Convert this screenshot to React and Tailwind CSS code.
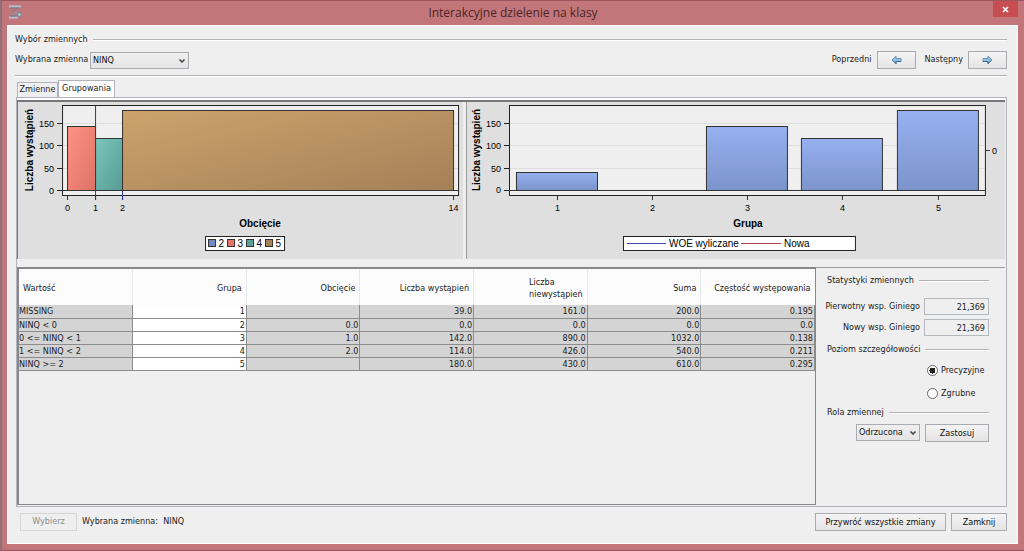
import React, { useState } from "react";
import { ChevronDown } from "lucide-react";

const columns = [
  "Wartość",
  "Grupa",
  "Obcięcie",
  "Liczba wystąpień",
  "Liczba niewystąpień",
  "Suma",
  "Częstość występowania",
];

const rows = [
  ["MISSING", "1", "", "39.0", "161.0", "200.0", "0.195"],
  ["NINQ < 0", "2", "0.0", "0.0", "0.0", "0.0", "0.0"],
  ["0 <= NINQ < 1", "3", "1.0", "142.0", "890.0", "1032.0", "0.138"],
  ["1 <= NINQ < 2", "4", "2.0", "114.0", "426.0", "540.0", "0.211"],
  ["NINQ >= 2", "5", "", "180.0", "430.0", "610.0", "0.295"],
];

const yTicks = [
  { label: "150", y: 123.5 },
  { label: "100", y: 145.5 },
  { label: "50", y: 168.5 },
  { label: "0", y: 190.5 },
];

const cutTicks = [
  { label: "0", x: 67.5 },
  { label: "1", x: 95.5 },
  { label: "2", x: 122.5 },
  { label: "14", x: 453.5 },
];

const cutLegend = [
  { label: "2", x: 208.5, fill: "#7488c4" },
  { label: "3", x: 227.5, fill: "#e5776b" },
  { label: "4", x: 246.5, fill: "#5aa198" },
  { label: "5", x: 265.5, fill: "#a8835a" },
];

const groupBars = [
  { label: "1", x: 557.5, top: 172.5 },
  { label: "2", x: 652.5, top: null },
  { label: "3", x: 747.5, top: 126.5 },
  { label: "4", x: 842.5, top: 138.5 },
  { label: "5", x: 938.5, top: 110.5 },
];

const buttonClass =
  "h-[18px] border border-[#a9abb0] bg-gradient-to-b from-[#f4f4f4] to-[#e4e4e4] text-center leading-[14px] text-[#111]";

const AppIcon = () => (
  <svg width="16" height="16" viewBox="0 0 16 16" fill="none">
    <path d="M1 2.5h12M1 13.5h9" stroke="#b3c3d3" strokeWidth="2" />
    <path d="M2 4h10M2 12h8" stroke="#77708c" strokeWidth="1" />
    <path d="M5 11V9M7.5 11V7M10 12V8" stroke="#8c97a8" strokeWidth="2" />
    <path d="M5 7l4-2" stroke="#8d6f8d" strokeWidth="1" />
    <circle cx="11.5" cy="10.5" r="2" fill="#a9c4c8" stroke="#6d7f98" />
  </svg>
);

const ArrowIcon = ({ flip }) => (
  <svg width="11" height="10" viewBox="0 0 11 10" className={flip ? "-scale-x-100" : ""}>
    <path d="M1 5l4-4v2.5h5v3H5V9z" fill="#8fc0e4" stroke="#6f93b2" strokeLinejoin="round" />
    <path d="M2 5.5l3 3v-2h5" fill="none" stroke="#3c6c96" />
  </svg>
);

const SectionTitle = ({ children }) => (
  <div className="flex h-3 items-center gap-[5px]">
    <span className="whitespace-nowrap">{children}</span>
    <span className="h-[2px] flex-1 border-t border-b border-t-[#b2b2b2] border-b-white" />
  </div>
);

const Dropdown = ({ id, label, options, className }) => (
  <div className={`relative ${className}`}>
    <select
      id={id}
      aria-label={label}
      className="h-[17px] w-full appearance-none border border-[#a9abb0] bg-gradient-to-b from-[#efefef] to-[#e4e4e4] pl-[2px] leading-[13px] text-[#111]"
    >
      {options.map((option) => (
        <option key={option}>{option}</option>
      ))}
    </select>
    <ChevronDown
      className="pointer-events-none absolute top-[5px] right-[3px] h-2 w-2 text-[#444]"
      strokeWidth={5}
    />
  </div>
);

const YAxis = ({ axisX, endX, titleX }) => (
  <g>
    <text
      transform={`translate(${titleX} 150) rotate(-90)`}
      textAnchor="middle"
      fontSize="10"
      fontWeight="bold"
    >
      Liczba wystąpień
    </text>
    {yTicks.map((tick) => (
      <g key={tick.label}>
        <path d={`M${axisX} ${tick.y}H${endX}`} stroke="#dedede" />
        <path d={`M${axisX - 5} ${tick.y}H${axisX}`} stroke="#222" />
        <text x={axisX - 8} y={tick.y + 3} textAnchor="end" fontSize="9">
          {tick.label}
        </text>
      </g>
    ))}
  </g>
);

const CutChart = () => (
  <svg
    viewBox="18 102 445 157"
    className="block h-full w-full font-['Liberation_Sans',sans-serif]"
    role="img"
    aria-label="Obcięcie"
  >
    <defs>
      <linearGradient id="red" x1="0" y1="0" x2="1" y2="1">
        <stop offset="0" stopColor="#ff9384" />
        <stop offset="1" stopColor="#dc7266" />
      </linearGradient>
      <linearGradient id="teal" x1="0" y1="0" x2="1" y2="1">
        <stop offset="0" stopColor="#7ac6bc" />
        <stop offset="1" stopColor="#569b93" />
      </linearGradient>
      <linearGradient id="tan" x1="0" y1="0" x2="1" y2="1">
        <stop offset="0" stopColor="#cda26c" />
        <stop offset="1" stopColor="#a58158" />
      </linearGradient>
    </defs>
    <rect x="62" y="106" width="397" height="89" fill="#efefef" />
    <YAxis axisX={62} endX={458} titleX={33} />
    <rect x="67.5" y="126.5" width="28" height="64" fill="url(#red)" stroke="#333" />
    <rect x="95.5" y="138.5" width="27" height="52" fill="url(#teal)" stroke="#333" />
    <rect x="122.5" y="110.5" width="331" height="80" fill="url(#tan)" stroke="#333" />
    <rect x="62.5" y="105.5" width="396" height="90" fill="none" stroke="#222" />
    <path d="M62 190.5H458" stroke="#333" />
    {cutTicks.map((tick) => (
      <g key={tick.label}>
        <path d={`M${tick.x} 196V200`} stroke="#333" />
        <text x={tick.x} y="211" textAnchor="middle" fontSize="9">
          {tick.label}
        </text>
      </g>
    ))}
    <path d="M95.5 106V200M122.5 191V200" stroke="#2c34a0" />
    <text x="260" y="227" textAnchor="middle" fontSize="10" fontWeight="bold">
      Obcięcie
    </text>
    <rect x="205.5" y="236.5" width="79" height="14" fill="#fff" stroke="#222" />
    {cutLegend.map((item) => (
      <g key={item.label}>
        <rect x={item.x} y="239.5" width="7" height="7" fill={item.fill} stroke="#333" />
        <text x={item.x + 10} y="247" fontSize="10">
          {item.label}
        </text>
      </g>
    ))}
  </svg>
);

const GroupChart = () => (
  <svg
    viewBox="467 102 538 157"
    className="block h-full w-full font-['Liberation_Sans',sans-serif]"
    role="img"
    aria-label="Grupa"
  >
    <defs>
      <linearGradient id="blue" x1="0" y1="0" x2="0" y2="1">
        <stop offset="0" stopColor="#97b1f1" />
        <stop offset="1" stopColor="#7b94cb" />
      </linearGradient>
    </defs>
    <rect x="509" y="106" width="477" height="89" fill="#efefef" />
    <YAxis axisX={509} endX={985} titleX={480} />
    {groupBars.map((bar) => (
      <g key={bar.label}>
        {bar.top && (
          <rect
            x={bar.x - 41}
            y={bar.top}
            width="81"
            height={190.5 - bar.top}
            fill="url(#blue)"
            stroke="#333"
          />
        )}
        <path d={`M${bar.x} 196V200`} stroke="#333" />
        <text x={bar.x} y="211" textAnchor="middle" fontSize="9">
          {bar.label}
        </text>
      </g>
    ))}
    <rect x="509.5" y="105.5" width="476" height="90" fill="none" stroke="#222" />
    <path d="M509 190.5H985M986 150.5H990" stroke="#333" />
    <text x="992" y="154" fontSize="9">
      0
    </text>
    <text x="748" y="227" textAnchor="middle" fontSize="10" fontWeight="bold">
      Grupa
    </text>
    <rect x="623.5" y="236.5" width="232" height="14" fill="#fff" stroke="#222" />
    <path d="M627 243.5H666" stroke="#3c48b4" />
    <text x="669" y="247" fontSize="10">
      WOE wyliczane
    </text>
    <path d="M741 243.5H781" stroke="#b43c44" />
    <text x="784" y="247" fontSize="10">
      Nowa
    </text>
  </svg>
);

const GroupTable = () => (
  <table className="w-full table-fixed border-collapse">
    <thead>
      <tr className="h-9 bg-[#fcfcfc]">
        {columns.map((column, index) => (
          <th
            key={column}
            className={`border-r border-[#e6e9ec] px-1 pt-[2px] font-normal leading-3 last:border-r-0 ${
              index === 0 ? "text-left" : "text-right"
            }`}
          >
            {column === "Liczba niewystąpień" ? (
              <span className="inline-block text-left">
                Liczba
                <br />
                niewystąpień
              </span>
            ) : (
              column
            )}
          </th>
        ))}
      </tr>
    </thead>
    <tbody>
      {rows.map((row) => (
        <tr key={row[0]} className="h-[13px]">
          {row.map((cell, index) => (
            <td
              key={index}
              className={`border-r border-b border-[#8c8c8c] p-0 leading-3 ${
                index === 0 ? "text-left" : "pr-px text-right"
              } ${index === 1 ? "bg-white" : "bg-[#d4d4d4]"}`}
            >
              {cell}
            </td>
          ))}
        </tr>
      ))}
    </tbody>
  </table>
);

const StatField = ({ id, label }) => (
  <div className="flex items-center justify-end gap-1">
    <label htmlFor={id} className="whitespace-nowrap">
      {label}
    </label>
    <input
      id={id}
      readOnly
      defaultValue="21,369"
      className="h-[17px] w-[65px] shrink-0 border border-[#b5b8bc] bg-[#efefef] pr-[3px] text-right"
    />
  </div>
);

const DetailRadio = ({ value, checked, onChange }) => (
  <label className="flex h-[13px] w-[62px] items-center gap-[3px]">
    <input
      type="radio"
      name="detail"
      checked={checked}
      onChange={() => onChange(value)}
      className="h-[11px] w-[11px] shrink-0 appearance-none rounded-full border border-[#666] bg-white checked:bg-[radial-gradient(circle,#222_0_3px,#fff_3px)]"
    />
    {value}
  </label>
);

const SidePanel = () => {
  const [detail, setDetail] = useState("Precyzyjne");

  return (
    <aside className="w-[189px] shrink-0 border-t border-[#999] pt-[7px] pr-4 pl-[11px]">
      <SectionTitle>Statystyki zmiennych</SectionTitle>
      <div className="mt-[11px] flex flex-col gap-1">
        <StatField id="gini-old" label="Pierwotny wsp. Giniego" />
        <StatField id="gini-new" label="Nowy wsp. Giniego" />
      </div>
      <div className="mt-2">
        <SectionTitle>Poziom szczegółowości</SectionTitle>
      </div>
      <div className="mt-2 flex flex-col items-end gap-[10px]">
        {["Precyzyjne", "Zgrubne"].map((value) => (
          <DetailRadio
            key={value}
            value={value}
            checked={detail === value}
            onChange={setDetail}
          />
        ))}
      </div>
      <div className="mt-[7px]">
        <SectionTitle>Rola zmiennej</SectionTitle>
      </div>
      <div className="mt-[5px] flex justify-end gap-[5px]">
        <Dropdown label="Rola zmiennej" options={["Odrzucona", "Wejściowa"]} className="w-16" />
        <button className={`${buttonClass} w-16`}>Zastosuj</button>
      </div>
    </aside>
  );
};

const App = () => {
  return (
    <div className="flex min-h-screen flex-col border-t border-b border-l-2 border-t-[#9d545c] border-b-[#9d545c] border-l-[#8f7078] bg-[#c27679] font-['DejaVu_Sans_Condensed','DejaVu_Sans',sans-serif] text-[9px] text-[#222]">
      {/* Title bar */}
      <header className="grid h-6 grid-cols-[1fr_auto_1fr] pr-[6px] pl-[6px]">
        <div className="pt-[3px]">
          <AppIcon />
        </div>
        <h1 className="font-['Open_Sans',sans-serif] text-xs leading-6 text-[#4a2428]">
          Interakcyjne dzielenie na klasy
        </h1>
        <button
          aria-label="Zamknij okno"
          className="flex h-4 w-[25px] items-center justify-center justify-self-end bg-[#c74e50]"
        >
          <svg width="7" height="7" viewBox="0 0 7 7">
            <path d="M1 1l5 5M6 1L1 6" stroke="#fff" strokeWidth="1.5" />
          </svg>
        </button>
      </header>

      <main className="mr-[6px] mb-[6px] ml-[5px] flex flex-1 flex-col border border-white bg-[#efefef] pr-[10px] pl-[7px]">
        {/* Variable selection */}
        <div className="mt-2">
          <SectionTitle>Wybór zmiennych</SectionTitle>
        </div>
        <div className="mt-1 flex h-5 items-center justify-between">
          <div className="flex items-center gap-1">
            <label htmlFor="variable" className="w-[71px] whitespace-nowrap">
              Wybrana zmienna
            </label>
            <Dropdown id="variable" options={["NINQ"]} className="w-[99px]" />
          </div>
          <div className="flex items-center gap-[5px]">
            <span>Poprzedni</span>
            <button
              aria-label="Poprzedni"
              className={`${buttonClass} flex w-[39px] items-center justify-center`}
            >
              <ArrowIcon />
            </button>
            <span className="ml-1">Następny</span>
            <button
              aria-label="Następny"
              className={`${buttonClass} flex w-[39px] items-center justify-center`}
            >
              <ArrowIcon flip />
            </button>
          </div>
        </div>
        <div className="mt-[5px] h-[2px] border-t border-b border-t-[#b2b2b2] border-b-white" />

        {/* Tabs */}
        <div className="mt-[3px] ml-[2px] flex items-end" role="tablist">
          <button
            role="tab"
            aria-selected="false"
            className="h-[15px] w-[41px] border border-b-0 border-[#b0b4ba] text-center"
          >
            Zmienne
          </button>
          <button
            role="tab"
            aria-selected="true"
            className="h-[17px] w-[57px] border border-b-0 border-[#b0b4ba] bg-white text-center"
          >
            Grupowania
          </button>
        </div>

        <div className="ml-px flex flex-1 flex-col border border-[#b0b4ba] pr-px pb-px">
          <div className="h-[2px] bg-white" />
          <div className="flex gap-[3px] border-t-2 border-[#777] bg-[#efefef]">
            <div className="h-[157px] min-w-0 flex-[446] border-l border-[#777] bg-[#dfdfdf]">
              <CutChart />
            </div>
            <div className="h-[157px] min-w-0 flex-[539] border-l border-[#999] bg-[#dfdfdf]">
              <GroupChart />
            </div>
          </div>

          <div className="mt-2 flex flex-1">
            <div className="min-w-0 flex-1 border border-t-2 border-l-2 border-[#888]">
              <GroupTable />
            </div>
            <SidePanel />
          </div>
        </div>

        {/* Footer */}
        <div className="mt-[6px] mb-3 flex items-center gap-[5px] pl-[5px]">
          <button disabled className="h-[18px] w-[57px] border border-[#d5d5d5] text-[#8d8d8d]">
            Wybierz
          </button>
          <span className="flex-1">Wybrana zmienna:&nbsp; NINQ</span>
          <button className={`${buttonClass} w-[131px]`}>Przywróć wszystkie zmiany</button>
          <button className={`${buttonClass} w-14`}>Zamknij</button>
        </div>
      </main>
    </div>
  );
};

export default App;
